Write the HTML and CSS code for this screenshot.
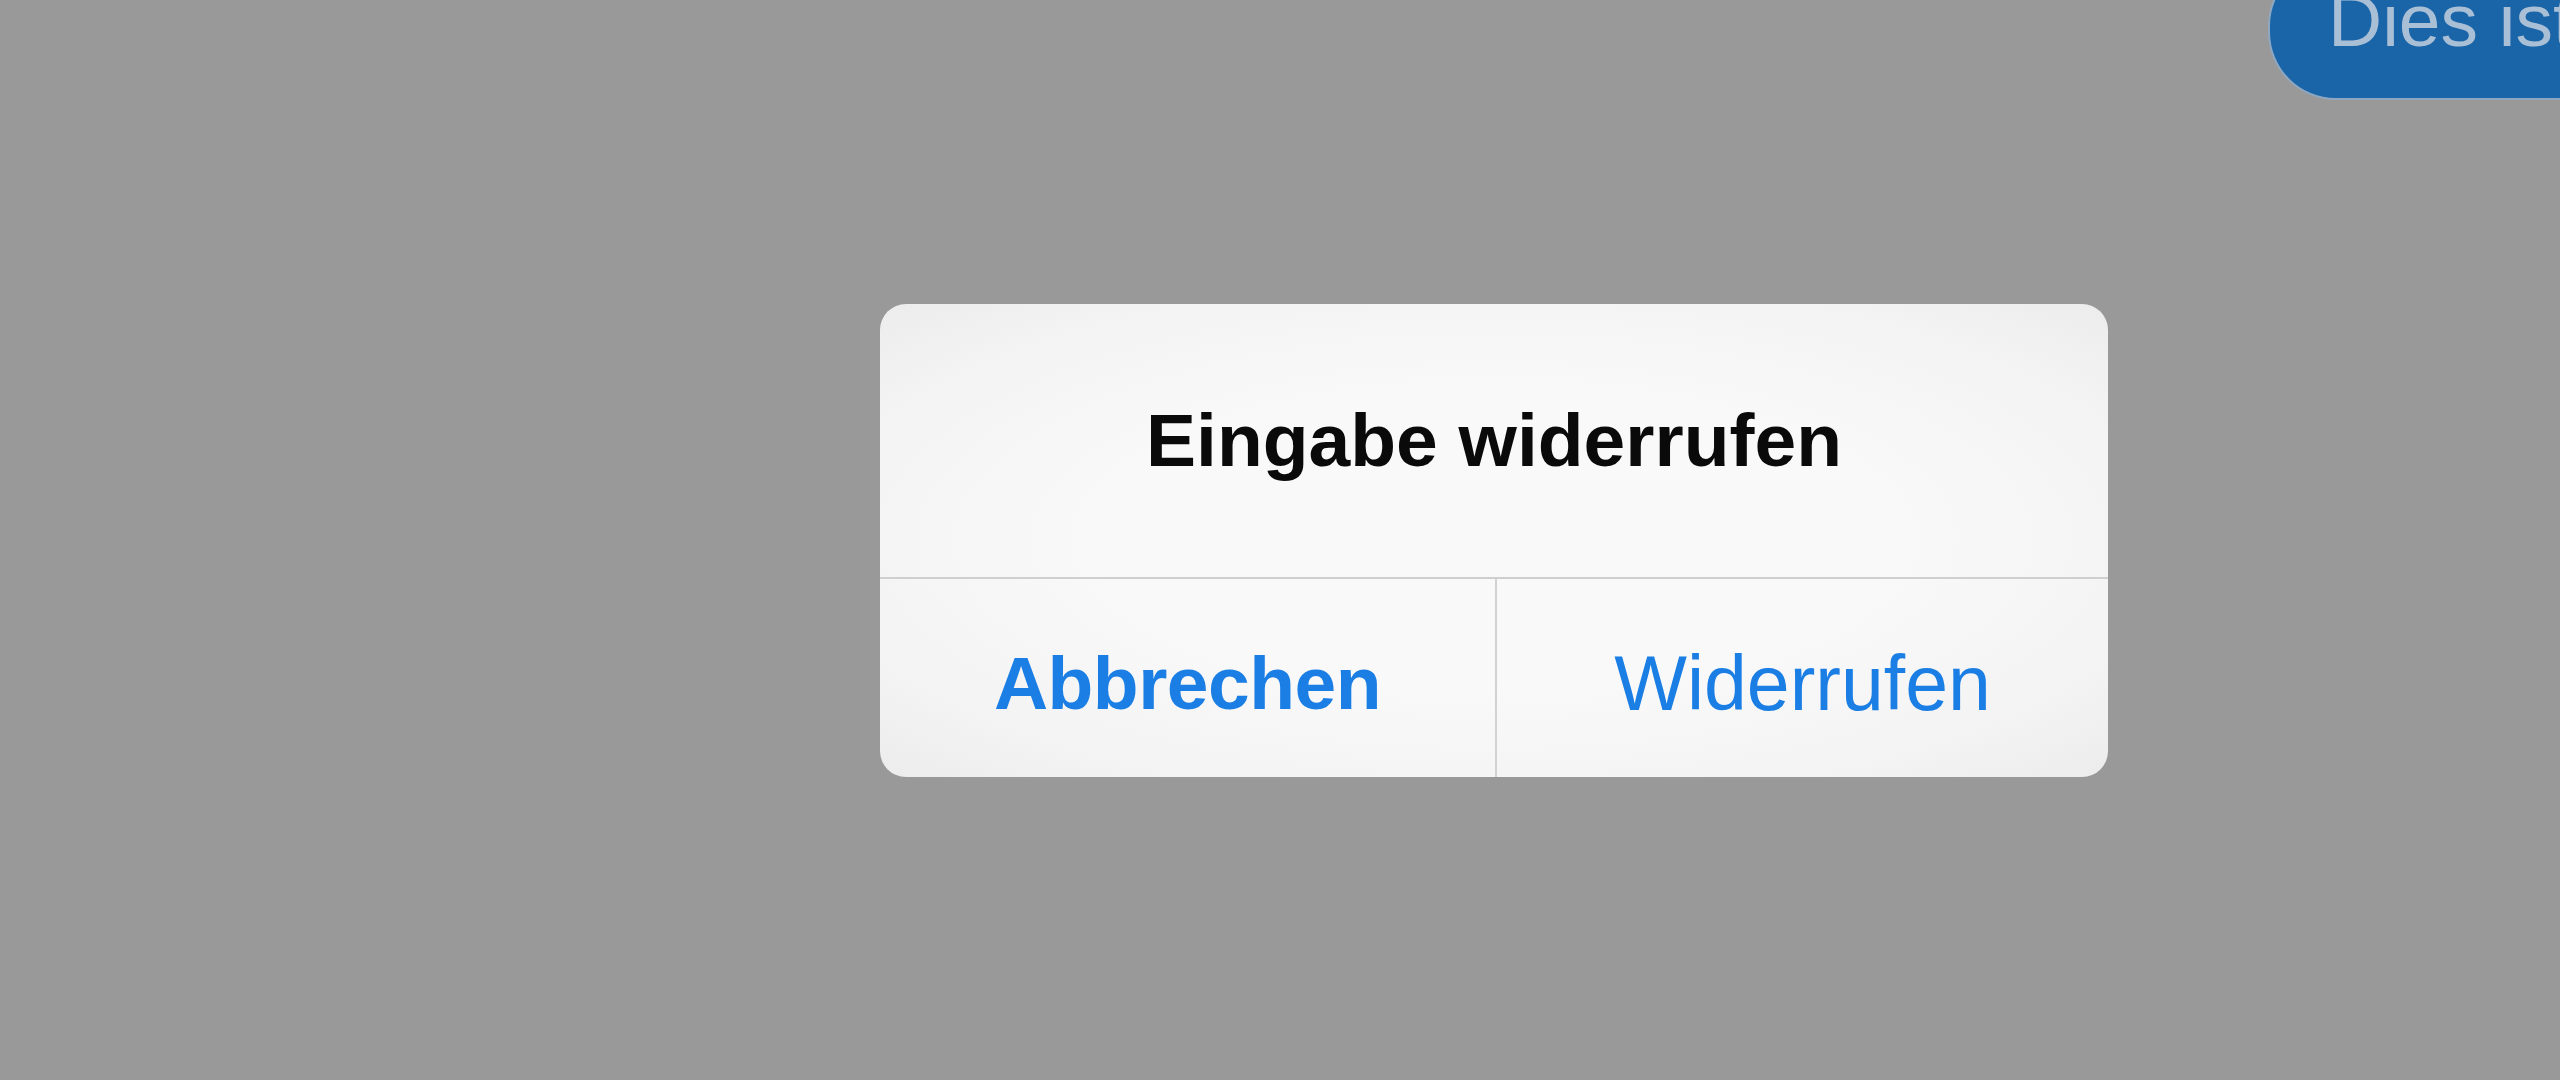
FILE: index.html
```html
<!DOCTYPE html>
<html lang="de">
<head>
<meta charset="utf-8">
<title>Eingabe widerrufen</title>
<link rel="stylesheet" href="styles.css">
</head>
<body>
<div class="app">
  <div class="thread">
    <div class="bubble">Dies ist ein Test</div>
  </div>
  <div class="overlay">
    <div class="alert">
      <div class="alert-title">Eingabe widerrufen</div>
      <div class="alert-actions">
        <div class="action action-cancel">Abbrechen</div>
        <div class="action action-default">Widerrufen</div>
      </div>
    </div>
  </div>
</div>
</body>
</html>
```

FILE: styles.css
```css
html, body {
  margin: 0;
  padding: 0;
}

body {
  width: 2560px;
  height: 1080px;
  overflow: hidden;
  background: #999999;
  font-family: "Liberation Sans", Arial, sans-serif;
}

.app {
  position: relative;
  width: 2560px;
  height: 1080px;
  overflow: hidden;
  background: #999999;
}

.thread {
  display: flex;
  padding-left: 2270px;
}

.bubble {
  flex: none;
  margin-top: -40px;
  height: 138px;
  box-sizing: border-box;
  padding: 17px 80px 37px 58px;
  background: #1a64a8;
  border-radius: 66px;
  box-shadow: 0 0 0 2px #8ea8c2;
  color: #a9bfd6;
  font-size: 75px;
  line-height: 86px;
  white-space: nowrap;
}

.overlay {
  position: absolute;
  inset: 0;
  display: flex;
  align-items: center;
  justify-content: center;
  padding-left: 428px;
}

.alert {
  width: 1228px;
  height: 473px;
  border-radius: 26px;
  overflow: hidden;
  background: radial-gradient(ellipse at 50% 50%, #f9f9f9 45%, #f3f3f3 80%, #ececec 100%);
  display: flex;
  flex-direction: column;
}

.alert-title {
  height: 273px;
  flex: none;
  display: flex;
  align-items: center;
  justify-content: center;
  border-bottom: 2px solid #cfcfcf;
  font-size: 75px;
  font-weight: bold;
  color: #0a0a0a;
  line-height: 1;
}

.alert-actions {
  flex: 1;
  display: grid;
  grid-template-columns: 615px 1fr;
}

.action {
  display: flex;
  align-items: center;
  justify-content: center;
  padding-top: 12px;
  font-size: 75px;
  line-height: 1;
  color: #1b7ee4;
}

.action-cancel {
  font-weight: bold;
  letter-spacing: -0.5px;
}

.action-default {
  border-left: 2px solid #d2d2d2;
  font-size: 77px;
}
```
